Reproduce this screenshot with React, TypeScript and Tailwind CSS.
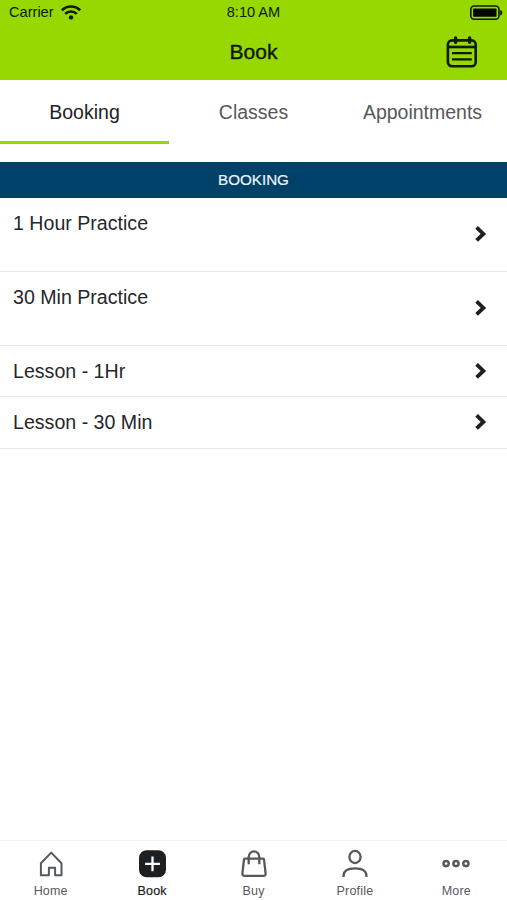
import type { ReactNode } from 'react';
import clsx from 'clsx';

const tabs = ['Booking', 'Classes', 'Appointments'];

const services = [
  { name: '1 Hour Practice', height: 'h-[74px]' },
  { name: '30 Min Practice', height: 'h-[74px]' },
  { name: 'Lesson - 1Hr', height: 'h-[51px]' },
  { name: 'Lesson - 30 Min', height: 'h-[52px]' },
];

function StatusBar() {
  return (
    <div className="grid h-6 grid-cols-3 items-center text-[14.6px] leading-6 text-[#0e1800]">
      <div className="flex items-center gap-[7px] pl-[9px]">
        <span>Carrier</span>
        <svg width="20" height="15" viewBox="0 0 20 15" fill="none" stroke="#101a00" strokeWidth="2.6">
          <path d="M0.9 5.3a12.9 12.9 0 0 1 18.2 0" />
          <path d="M4.2 8.9a8.2 8.2 0 0 1 11.6 0" />
          <circle cx="10" cy="12.4" r="2.2" fill="#101a00" stroke="none" />
        </svg>
      </div>
      <span className="text-center">8:10 AM</span>
      <svg className="mr-[4px] mt-px justify-self-end" width="33" height="16" viewBox="0 0 33 16">
        <rect x="0.8" y="1" width="28.2" height="13.2" rx="3.4" fill="none" stroke="#101a00" strokeWidth="1.6" />
        <rect x="3.1" y="3.4" width="23.4" height="8.4" rx="0.8" fill="#050800" />
        <path d="M30.2 5c2.8.6 2.8 4.8 0 5.4z" fill="#101a00" />
      </svg>
    </div>
  );
}

function CalendarIcon() {
  return (
    <svg width="32" height="32" viewBox="0 0 32 32" fill="none" stroke="#101a00" strokeWidth="2.6" strokeLinecap="round">
      <rect x="1.9" y="4.4" width="27.8" height="25.8" rx="4" />
      <path d="M1.9 11h27.8" strokeLinecap="butt" />
      <path d="M9.6 2v4.3M23.6 2v4.3" strokeWidth="3.4" />
      <path d="M7.1 17.2h17.6M7.1 23.4h17.6" strokeLinecap="square" strokeWidth="2.2" />
    </svg>
  );
}

function Chevron() {
  return (
    <svg className="mb-px" width="12" height="18" viewBox="0 0 12 18" fill="none" stroke="#1d1f21" strokeWidth="3.8">
      <path d="M1.6 2.4L8.4 8.9l-6.8 6.5" />
    </svg>
  );
}

function NavItem({ label, active, children }: { label: string; active?: boolean; children: ReactNode }) {
  return (
    <button
      className={clsx(
        'flex flex-1 flex-col items-center pt-[8px] text-[12.5px] leading-[15px] tracking-[0.2px]',
        active ? 'text-[#1d2023]' : 'text-[#56595c]',
      )}
    >
      <svg width="30" height="30" viewBox="0 0 30 30" fill="none" stroke="currentColor" strokeWidth="2.3">
        {children}
      </svg>
      <span className={clsx('mt-[5px]', active && '[-webkit-text-stroke:0.2px_currentColor]')}>{label}</span>
    </button>
  );
}

export default function App() {
  return (
    <div className="flex h-[900px] w-[507px] flex-col bg-white font-['Liberation_Sans',Arial,sans-serif]">
      <header className="h-20 bg-[#96d800]">
        <StatusBar />
        <div className="grid h-14 grid-cols-3 items-center">
          <h1 className="col-start-2 text-center text-[21px] leading-[56px] text-[#0e1800] [-webkit-text-stroke:0.4px_currentColor]">
            Book
          </h1>
          <button className="mr-[29px] justify-self-end">
            <CalendarIcon />
          </button>
        </div>
      </header>

      <nav className="flex h-16 text-[19.5px]">
        {tabs.map((tab, i) => (
          <button
            key={tab}
            className={clsx(
              'flex-1 border-b-[3px] pt-[3px] leading-[58px]',
              i === 0 ? 'border-[#96d800] text-[#202225]' : 'border-transparent text-[#55585b]',
            )}
          >
            {tab}
          </button>
        ))}
      </nav>

      <main className="mt-[18px] flex-1">
        <h2 className="h-9 bg-[#004169] text-center text-[15.2px] leading-[35px] text-[#eef4f8] [-webkit-text-stroke:0.2px_currentColor]">
          BOOKING
        </h2>
        <ul>
          {services.map((service) => (
            <li
              key={service.name}
              className={clsx('flex items-center justify-between border-b border-[#e6e7e8] pr-[20px] pl-[13px]', service.height)}
            >
              <span className="self-start pt-[12px] text-[19.6px] leading-[26px] text-[#25272a]">{service.name}</span>
              <Chevron />
            </li>
          ))}
        </ul>
      </main>

      <footer className="flex h-[60px] border-t border-[#f1f1f1]">
        <NavItem label="Home">
          <path d="M4.9 14.2L15.2 3.6l10.3 10.6v12.1h-6.4v-7.6h-6.2v7.6h-8z" strokeLinejoin="round" strokeWidth="2" />
        </NavItem>
        <NavItem label="Book" active>
          <rect x="2" y="1.3" width="27" height="27" rx="7.5" fill="currentColor" stroke="none" />
          <path d="M15.5 7.4v14.8M8.1 14.8h14.8" stroke="#fff" strokeWidth="2.3" />
        </NavItem>
        <NavItem label="Buy">
          <path d="M5.9 9.6h18.2q.8 0 .9.8l1.6 14q.2 2.5-2.2 2.5H5.6q-2.4 0-2.2-2.5l1.6-14q.1-.8.9-.8z" strokeLinejoin="round" />
          <path d="M9.7 15.3V8a5.3 5.6 0 0 1 10.6 0v7.3" />
        </NavItem>
        <NavItem label="Profile">
          <ellipse cx="15" cy="8" rx="5.6" ry="6.1" />
          <path d="M3.6 28v-1.2c0-4.6 3.8-7.5 11.4-7.5s11.4 2.9 11.4 7.5V28" />
        </NavItem>
        <NavItem label="More">
          <g strokeWidth="2.5">
            <circle cx="5.1" cy="14.6" r="2.6" />
            <circle cx="15" cy="14.6" r="2.6" />
            <circle cx="24.9" cy="14.6" r="2.6" />
          </g>
        </NavItem>
      </footer>
    </div>
  );
}
